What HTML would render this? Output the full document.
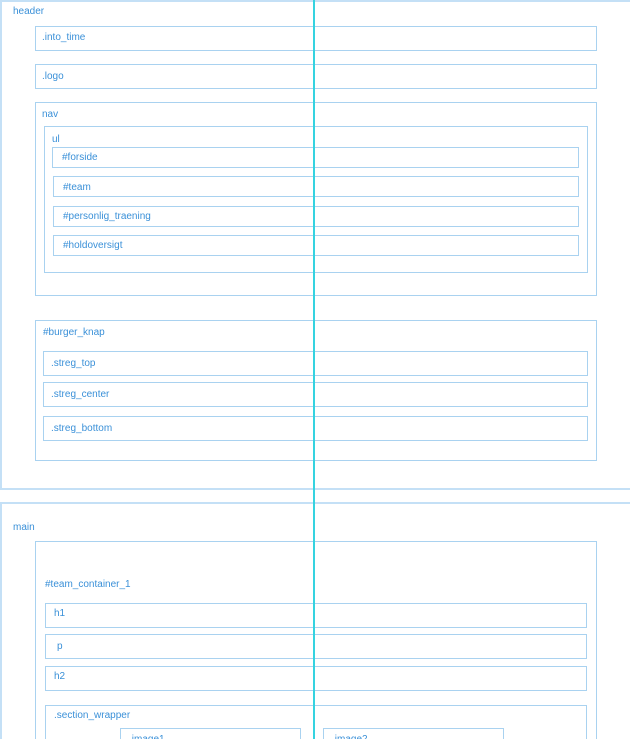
<!DOCTYPE html>
<html><head><style>
html,body{margin:0;padding:0;width:630px;height:739px;overflow:hidden;background:#fff;position:relative;font-family:"Liberation Sans",sans-serif;}
.b{position:absolute;border:1.5px solid #a9d2f0;box-sizing:border-box;}
.t{position:absolute;font-size:10px;color:#3a90d8;line-height:12px;white-space:nowrap;}
.v{position:absolute;left:313px;top:0;width:1.5px;height:739px;background:#35d3e0;}
</style></head><body>
<div class="b" style="left:0;top:0;width:632px;height:490px;border-width:2px;border-color:#c4e0f6"></div>
<div class="t" style="left:13px;top:6px">header</div>
<div class="b" style="left:35px;top:26px;width:562px;height:25px"></div><div class="t" style="left:42px;top:32px">.into_time</div>
<div class="b" style="left:35px;top:64px;width:562px;height:25px"></div><div class="t" style="left:42px;top:71px">.logo</div>
<div class="b" style="left:35px;top:102px;width:562px;height:194px"></div><div class="t" style="left:42px;top:109px">nav</div>
<div class="b" style="left:44px;top:126px;width:544px;height:147px"></div><div class="t" style="left:52px;top:134px">ul</div>
<div class="b" style="left:52px;top:147px;width:527px;height:21px"></div><div class="t" style="left:62px;top:152px">#forside</div>
<div class="b" style="left:53px;top:176px;width:526px;height:21px"></div><div class="t" style="left:63px;top:182px">#team</div>
<div class="b" style="left:53px;top:206px;width:526px;height:21px"></div><div class="t" style="left:63px;top:211px">#personlig_traening</div>
<div class="b" style="left:53px;top:235px;width:526px;height:21px"></div><div class="t" style="left:63px;top:240px">#holdoversigt</div>
<div class="b" style="left:35px;top:320px;width:562px;height:141px"></div><div class="t" style="left:43px;top:327px">#burger_knap</div>
<div class="b" style="left:43px;top:351px;width:545px;height:25px"></div><div class="t" style="left:51px;top:358px">.streg_top</div>
<div class="b" style="left:43px;top:382px;width:545px;height:25px"></div><div class="t" style="left:51px;top:389px">.streg_center</div>
<div class="b" style="left:43px;top:416px;width:545px;height:25px"></div><div class="t" style="left:51px;top:423px">.streg_bottom</div>
<div class="b" style="left:0;top:502px;width:632px;height:260px;border-width:2px;border-color:#c4e0f6"></div>
<div class="t" style="left:13px;top:522px">main</div>
<div class="b" style="left:35px;top:541px;width:562px;height:220px"></div>
<div class="t" style="left:45px;top:579px">#team_container_1</div>
<div class="b" style="left:45px;top:603px;width:542px;height:25px"></div><div class="t" style="left:54px;top:608px">h1</div>
<div class="b" style="left:45px;top:634px;width:542px;height:25px"></div><div class="t" style="left:57px;top:641px">p</div>
<div class="b" style="left:45px;top:666px;width:542px;height:25px"></div><div class="t" style="left:54px;top:671px">h2</div>
<div class="b" style="left:45px;top:705px;width:542px;height:60px"></div><div class="t" style="left:54px;top:710px">.section_wrapper</div>
<div class="b" style="left:120px;top:728px;width:181px;height:30px"></div><div class="t" style="left:129px;top:734px">.image1</div>
<div class="b" style="left:323px;top:728px;width:181px;height:30px"></div><div class="t" style="left:332px;top:734px">.image2</div>
<div class="v"></div>
</body></html>
